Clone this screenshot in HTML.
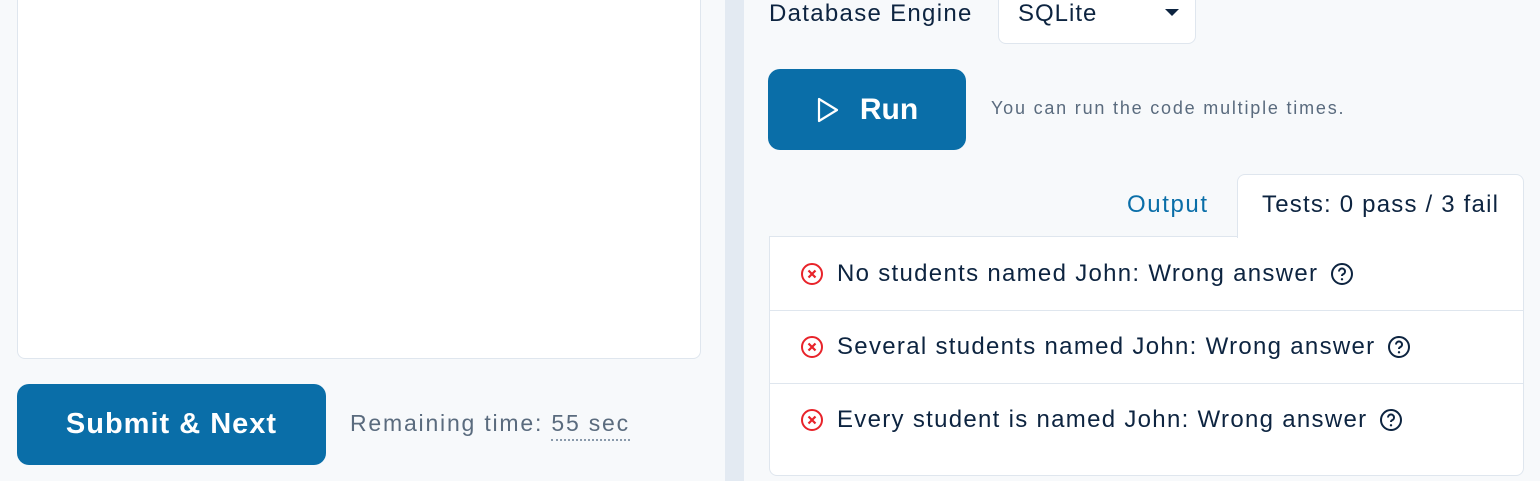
<!DOCTYPE html>
<html><head><meta charset="utf-8"><style>
*{box-sizing:border-box;margin:0;padding:0}
body{width:1540px;height:481px;background:#f7f9fb;font-family:"Liberation Sans",sans-serif;position:relative;overflow:hidden;color:#0d2440}
.abs{position:absolute}
.editor{left:17px;top:-10px;width:684px;height:369px;background:#fff;border:1px solid #dfe6ee;border-radius:8px}
.btn{background:#0a6ea8;color:#fff;border-radius:12px;font-weight:bold;display:flex;align-items:center;justify-content:center}
.strip{left:725px;top:0;width:19px;height:481px;background:#e3eaf2}
.row{left:770px;width:754px;height:73px;border-top:1px solid #dfe6ee;display:flex;align-items:center;padding-left:30px;font-size:24px;letter-spacing:1.3px}
</style></head><body>
<div class="abs editor"></div>
<div class="abs btn" style="left:17px;top:384px;width:309px;height:81px;font-size:29px;letter-spacing:1px">Submit &amp; Next</div>
<div class="abs" style="left:350px;top:410px;font-size:23px;color:#5a6b7e;letter-spacing:1.8px">Remaining time: <span style="border-bottom:2px dotted #8a9aab;padding-bottom:3px;color:#5a6b7e">55 sec</span></div>
<div class="abs strip"></div>
<div class="abs" style="left:769px;top:0px;font-size:24px;letter-spacing:1.3px;color:#0d2440">Database Engine</div>
<div class="abs" style="left:998px;top:-10px;width:198px;height:54px;background:#fff;border:1px solid #dfe6ee;border-radius:8px"></div>
<div class="abs" style="left:1018px;top:0px;font-size:24px;letter-spacing:1px">SQLite</div>
<div class="abs" style="left:1165px;top:9px;width:0;height:0;border-left:7px solid transparent;border-right:7px solid transparent;border-top:7px solid #0d2440"></div>
<div class="abs btn" style="left:768px;top:69px;width:198px;height:81px;font-size:30px">
<svg width="24" height="28" viewBox="0 0 24 28" style="margin-right:20px"><path d="M3 3 L21 14 L3 25 Z" fill="none" stroke="#fff" stroke-width="2.2" stroke-linejoin="round"/></svg>Run</div>
<div class="abs" style="left:991px;top:98px;font-size:18px;letter-spacing:1.8px;color:#5a6b7e">You can run the code multiple times.</div>
<div class="abs" style="left:1127px;top:191px;font-size:24px;letter-spacing:1.6px;color:#0a6ea8">Output</div>
<div class="abs" style="left:769px;top:236px;width:755px;height:240px;background:#fff;border:1px solid #dfe6ee;border-radius:0 0 8px 8px"></div>
<div class="abs" style="left:1237px;top:174px;width:287px;height:64px;background:#fff;border:1px solid #dfe6ee;border-bottom:none;border-radius:8px 8px 0 0"></div>
<div class="abs" style="left:1262px;top:191px;font-size:24px;letter-spacing:1.2px">Tests: 0 pass / 3 fail</div>
<div class="abs row" style="top:237px;border-top:none">
<svg width="24" height="24" viewBox="0 0 24 24" style="margin-right:13px"><circle cx="12" cy="12" r="10" fill="none" stroke="#e8232a" stroke-width="2"/><path d="M8.5 8.5l7 7M15.5 8.5l-7 7" stroke="#e8232a" stroke-width="2.2"/></svg>No students named John: Wrong answer
<svg width="24" height="24" viewBox="0 0 24 24" style="margin-left:12px"><circle cx="12" cy="12" r="10" fill="none" stroke="#0d2440" stroke-width="2"/><path d="M9 9.5a3 3 0 1 1 4 2.8c-.7.4-1 .9-1 1.7" fill="none" stroke="#0d2440" stroke-width="2"/><circle cx="12" cy="17.3" r="1.2" fill="#0d2440"/></svg></div>
<div class="abs row" style="top:310px">
<svg width="24" height="24" viewBox="0 0 24 24" style="margin-right:13px"><circle cx="12" cy="12" r="10" fill="none" stroke="#e8232a" stroke-width="2"/><path d="M8.5 8.5l7 7M15.5 8.5l-7 7" stroke="#e8232a" stroke-width="2.2"/></svg>Several students named John: Wrong answer
<svg width="24" height="24" viewBox="0 0 24 24" style="margin-left:12px"><circle cx="12" cy="12" r="10" fill="none" stroke="#0d2440" stroke-width="2"/><path d="M9 9.5a3 3 0 1 1 4 2.8c-.7.4-1 .9-1 1.7" fill="none" stroke="#0d2440" stroke-width="2"/><circle cx="12" cy="17.3" r="1.2" fill="#0d2440"/></svg></div>
<div class="abs row" style="top:383px">
<svg width="24" height="24" viewBox="0 0 24 24" style="margin-right:13px"><circle cx="12" cy="12" r="10" fill="none" stroke="#e8232a" stroke-width="2"/><path d="M8.5 8.5l7 7M15.5 8.5l-7 7" stroke="#e8232a" stroke-width="2.2"/></svg>Every student is named John: Wrong answer
<svg width="24" height="24" viewBox="0 0 24 24" style="margin-left:12px"><circle cx="12" cy="12" r="10" fill="none" stroke="#0d2440" stroke-width="2"/><path d="M9 9.5a3 3 0 1 1 4 2.8c-.7.4-1 .9-1 1.7" fill="none" stroke="#0d2440" stroke-width="2"/><circle cx="12" cy="17.3" r="1.2" fill="#0d2440"/></svg></div>
</body></html>
